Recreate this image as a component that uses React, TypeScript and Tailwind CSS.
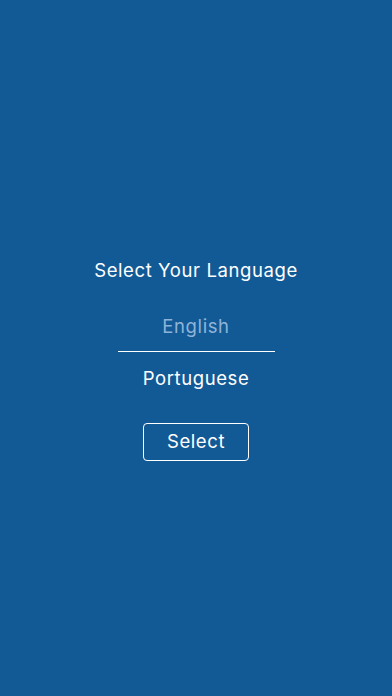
import React from 'react'

const languages = ['English', 'Portuguese']

export default function App() {
  const [selected, setSelected] = React.useState(1)

  return (
    <div
      className="min-h-[696px] w-full bg-[#125a96] flex flex-col items-center pt-[256px] tracking-[0.6px]"
      style={{ fontFamily: 'Inter, "Noto Sans", sans-serif' }}
    >
      <h1 className="h-[28px] leading-[28px] text-[18.5px] text-white font-normal">
        Select Your Language
      </h1>

      {/* Picker */}
      <div className="mt-[18px] w-[157px] flex flex-col">
        {languages.map((lang, i) => (
          <button
            key={lang}
            onClick={() => setSelected(i)}
            className={`h-[50px] text-[18.5px] ${
              i === 0 ? 'border-b border-white pt-[1px]' : 'pt-[3px]'
            } ${i === selected ? 'text-white' : 'text-[#8fb3d8]'}`}
          >
            {lang}
          </button>
        ))}
      </div>

      <button className="mt-[21px] w-[106px] h-[38px] border border-white rounded-[4px] text-white text-[18.5px]">
        Select
      </button>
    </div>
  )
}
